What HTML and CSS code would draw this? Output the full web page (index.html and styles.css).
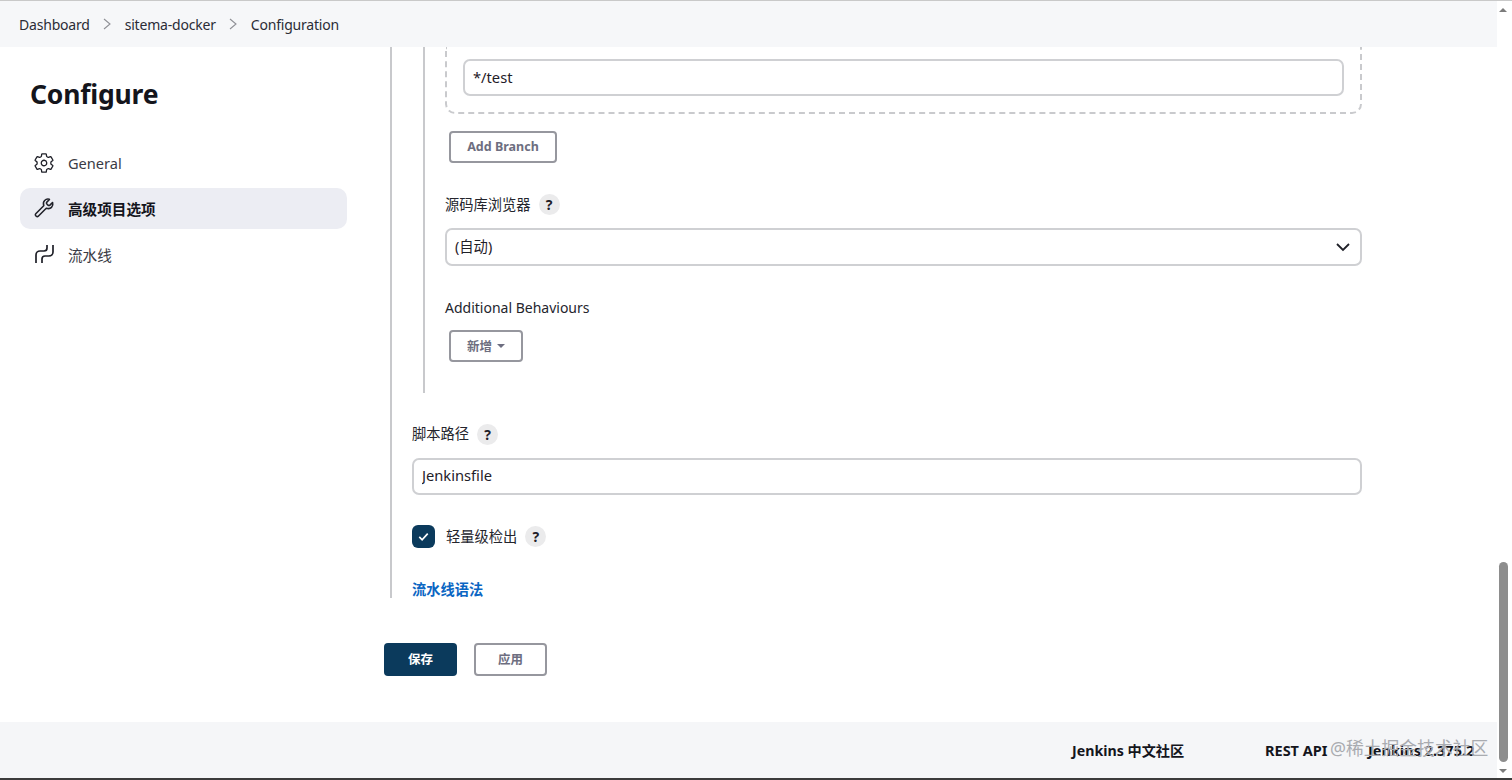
FILE: index.html
```html
<!DOCTYPE html>
<html lang="zh">
<head>
<meta charset="utf-8">
<title>Configuration</title>
<link rel="stylesheet" href="styles.css">
</head>
<body>
<div class="app">
  <nav class="crumbs">
    <a>Dashboard</a>
    <svg class="chev" viewBox="0 0 10 14"><path d="M2 2l6 5-6 5"/></svg>
    <a>sitema-docker</a>
    <svg class="chev" viewBox="0 0 10 14"><path d="M2 2l6 5-6 5"/></svg>
    <a>Configuration</a>
  </nav>
  <div class="main">
    <aside class="side">
      <h1>Configure</h1>
      <ul class="menu">
        <li class="item">
          <svg class="ico" viewBox="0 0 512 512"><path d="M262.29 192.31a64 64 0 1 0 57.4 57.4 64.13 64.13 0 0 0-57.4-57.4zM416.39 256a154.34 154.34 0 0 1-1.53 20.79l45.21 35.46a10.81 10.81 0 0 1 2.45 13.75l-42.77 74a10.81 10.81 0 0 1-13.14 4.59l-44.9-18.08a16.11 16.11 0 0 0-15.17 1.75A164.48 164.48 0 0 1 325 400.8a15.94 15.94 0 0 0-8.82 12.14l-6.73 47.89a11.08 11.08 0 0 1-10.68 9.17h-85.54a11.11 11.11 0 0 1-10.69-8.87l-6.72-47.82a16.07 16.07 0 0 0-9-12.22 155.3 155.3 0 0 1-21.46-12.57 16 16 0 0 0-15.11-1.71l-44.89 18.07a10.81 10.81 0 0 1-13.14-4.58l-42.77-74a10.8 10.8 0 0 1 2.45-13.75l38.21-30a16.05 16.05 0 0 0 6-14.08c-.36-4.17-.58-8.33-.58-12.5s.21-8.27.58-12.35a16 16 0 0 0-6.07-13.94l-38.19-30A10.81 10.81 0 0 1 49.48 186l42.77-74a10.81 10.81 0 0 1 13.14-4.59l44.9 18.08a16.11 16.11 0 0 0 15.17-1.75A164.48 164.48 0 0 1 187 111.2a15.94 15.94 0 0 0 8.82-12.14l6.73-47.89A11.08 11.08 0 0 1 213.23 42h85.54a11.11 11.11 0 0 1 10.69 8.87l6.72 47.82a16.07 16.07 0 0 0 9 12.22 155.3 155.3 0 0 1 21.46 12.57 16 16 0 0 0 15.11 1.71l44.89-18.07a10.81 10.81 0 0 1 13.14 4.58l42.77 74a10.8 10.8 0 0 1-2.45 13.75l-38.21 30a16.05 16.05 0 0 0-6.05 14.08c.33 4.14.55 8.3.55 12.47z"/></svg>
          <span>General</span>
        </li>
        <li class="item active">
          <svg class="ico wrench" viewBox="0 0 512 512"><path d="M393.9 190a32 32 0 0 1-45.3 0l-26.5-26.6a32 32 0 0 1 0-45.2L382 58.1a2 2 0 0 0-.8-3.4C345.7 43.6 300 52.4 271 81.1c-31.6 31.3-33.5 78.3-20 116.9.7 2.1.2 4.4-1.4 6L64.2 389.5a32 32 0 0 0 0 45.3l13 13a32 32 0 0 0 45.3 0L308 262.4c1.6-1.6 3.9-2.1 6-1.4 38.2 13.6 85.2 11.5 116.6-20 28.7-29 37.5-74.7 26.4-110.2a2 2 0 0 0-3.4-.8z"/></svg>
          <span>高级项目选项</span>
        </li>
        <li class="item">
          <svg class="ico" viewBox="0 0 22 22"><path class="thin" d="M3 20v-8a4 4 0 0 1 4-4h4a3 3 0 0 0 3-3V2"/><path class="thin" d="M20 2v7a4 4 0 0 1-4 4h-4a3 3 0 0 0-3 3v4"/></svg>
          <span>流水线</span>
        </li>
      </ul>
    </aside>
    <section class="content">
      <div class="form">
        <div class="nested">
          <div class="branch-box">
            <input class="field" value="*/test">
          </div>
          <button class="btn btn-add">Add Branch</button>
          <div class="label l-browser">源码库浏览器 <span class="help">?</span></div>
          <div class="select">
            <span>(自动)</span>
            <svg class="caret" viewBox="0 0 16 10"><path d="M2 2l6 6 6-6"/></svg>
          </div>
          <div class="label l-behav">Additional Behaviours</div>
          <button class="btn btn-new">新增 <i class="tri"></i></button>
        </div>
        <div class="label l-script">脚本路径 <span class="help">?</span></div>
        <input class="field field-script" value="Jenkinsfile">
        <div class="check-row">
          <span class="check"><svg viewBox="0 0 16 16"><path d="M3.5 8.5l3 3 6-6.5"/></svg></span>
          <span class="label-text">轻量级检出</span>
          <span class="help">?</span>
        </div>
        <a class="syntax">流水线语法</a>
      </div>
      <div class="actions">
        <button class="btn-primary">保存</button>
        <button class="btn btn-apply">应用</button>
      </div>
    </section>
  </div>
  <footer class="foot">
    <a class="f1">Jenkins 中文社区</a>
    <a class="f2">REST API</a>
    <span class="f3">Jenkins 2.375.2</span>
  </footer>
  <div class="watermark">@稀土掘金技术社区</div>
  <div class="scroll">
    <i class="arrow up"></i>
    <i class="thumb"></i>
    <i class="arrow down"></i>
  </div>
</div>
</body>
</html>
```
FILE: styles.css
```css
* { box-sizing: border-box; }
html, body { margin: 0; height: 780px; overflow: hidden; background: #fff; }
body { font-family: "Noto Sans", "Noto Sans CJK SC", sans-serif; font-size: 15px; color: #1f2028; }
.app { position: relative; width: 1512px; height: 780px; display: flex; flex-direction: column; border-top: 1px solid #c9c9c9; border-bottom: 2px solid #3c3c3c; overflow: hidden; }

.crumbs { flex: none; height: 46px; background: #f6f7f9; display: flex; align-items: center; padding-left: 19px; font-size: 14px; letter-spacing: -.2px; color: #2b2c36; }
.chev { width: 10px; height: 14px; margin: 0 13px 0 12px; fill: none; stroke: #8f9096; stroke-width: 1.1; }

.main { flex: 1; display: flex; min-height: 0; }
.side { flex: none; width: 390px; padding: 0 43px 0 20px; }
.side h1 { margin: 27px 0 0 10px; font-size: 26.5px; letter-spacing: -.2px; line-height: 40px; font-weight: 700; color: #14151c; }
.menu { list-style: none; margin: 28px 0 0; padding: 0; display: flex; flex-direction: column; gap: 5px; }
.item { height: 41px; display: flex; align-items: center; gap: 13px; padding-left: 13px; padding-bottom: 1px; border-radius: 10px; color: #3a3b45; font-size: 14.6px; }
.item:first-child { padding-bottom: 0; }
.item.active { background: #ecedf3; color: #14151c; font-weight: 700; }
.ico { width: 22px; height: 22px; flex: none; fill: none; stroke: #1f2028; stroke-width: 30; stroke-linecap: round; stroke-linejoin: round; }
.wrench { stroke-width: 36; }
.ico .thin { stroke-width: 1.7; stroke-linecap: butt; }

.content { flex: 1; min-width: 0; }
.form { width: 972px; height: 551px; border-left: 2px solid #c8c9cc; padding-left: 20px; }
.nested { width: 939px; height: 346px; margin-left: 11px; border-left: 2px solid #c8c9cc; padding-left: 20px; }
.branch-box { width: 917px; height: 67px; border: 2px dashed #c9cacd; border-top: 0; border-radius: 0 0 10px 10px; padding: 12px 17px 0 16px; }
.field { display: block; height: 37px; width: 881px; border: 2px solid #cfd0d3; border-radius: 7px; padding: 0 8px 2px; font: inherit; font-size: 14.7px; color: #1f2028; background: #fff; outline: 0; }
.btn { font-family: inherit; font-weight: 700; background: #fff; border: 2px solid #96979e; border-radius: 4px; color: #6d6e80; font-size: 12.5px; display: flex; align-items: center; justify-content: center; padding: 0 0 2px; }
.btn-add { width: 108px; height: 32px; margin: 17px 0 0 4px; }
.label { display: flex; align-items: center; gap: 8px; height: 22px; padding-bottom: 2px; font-size: 14.25px; color: #24252d; }
.l-browser { margin-top: 30px; }
.help { width: 21px; height: 21px; flex: none; margin-top: 2px; border-radius: 50%; background: #ebebec; color: #1f2028; font-size: 14px; font-weight: 700; display: flex; align-items: center; justify-content: center; }
.select { width: 917px; height: 38px; margin-top: 13px; border: 2px solid #cfd0d3; border-radius: 7px; padding: 0 9px 4px 8px; display: flex; align-items: center; justify-content: space-between; font-size: 14.3px; }
.caret { width: 16px; height: 10px; margin-top: 4px; fill: none; stroke: #1f2028; stroke-width: 1.8; }
.l-behav { margin-top: 30px; padding-bottom: 0; font-size: 14px; }
.btn-new { width: 74px; height: 32px; margin: 12px 0 0 4px; gap: 5px; }
.tri { width: 0; height: 0; margin-top: 2px; border: 4px solid transparent; border-top-color: #6d6e80; border-bottom: 0; }
.l-script { margin-top: 30px; padding-bottom: 4px; }
.l-script .help { margin-top: 4px; }
.field-script { width: 950px; height: 37px; margin-top: 13px; padding-bottom: 4px; }
.check-row { display: flex; align-items: center; gap: 11px; margin-top: 30px; height: 23px; }
.check { width: 23px; height: 23px; background: #0b3a5c; border-radius: 6px; display: flex; align-items: center; justify-content: center; }
.check svg { width: 15px; height: 15px; fill: none; stroke: #fff; stroke-width: 1.8; }
.label-text { font-size: 14.25px; color: #24252d; margin-right: -3px; padding-bottom: 2px; }
.check-row .help { margin-top: 0; }
.syntax { display: block; margin-top: 31px; font-weight: 700; font-size: 14.25px; line-height: 22px; color: #0b66c3; }
.actions { display: flex; gap: 17px; margin: 45px 0 0 -6px; }
.btn-primary { width: 73px; height: 33px; border: 0; border-radius: 4px; padding: 0 0 2px; background: #0b3a5c; color: #fff; font-family: inherit; font-weight: 700; font-size: 12.5px; }
.btn-apply { width: 73px; height: 33px; }

.foot { flex: none; height: 56px; background: #f5f6f8; position: relative; display: flex; align-items: center; font-weight: 700; font-size: 14.5px; color: #14151c; padding-left: 1072px; }
.f1 { width: 193px; font-size: 14.2px; }
.f2 { width: 103px; }
.watermark { position: absolute; left: 1330px; top: 735px; font-size: 17.8px; line-height: 24px; color: #a9abb0; white-space: nowrap; }
.scroll { position: absolute; right: 0; top: 0; bottom: 0; width: 15px; background: #fff; }
.thumb { position: absolute; left: 2px; top: 561px; width: 9px; height: 200px; border-radius: 5px; background: #8d8d8d; }
.arrow { position: absolute; left: 2px; width: 0; height: 0; border-left: 4px solid transparent; border-right: 4px solid transparent; }
.up { top: 7px; border-bottom: 4px solid #7c7c7c; }
.down { bottom: 5px; border-top: 4px solid #7c7c7c; }
```
